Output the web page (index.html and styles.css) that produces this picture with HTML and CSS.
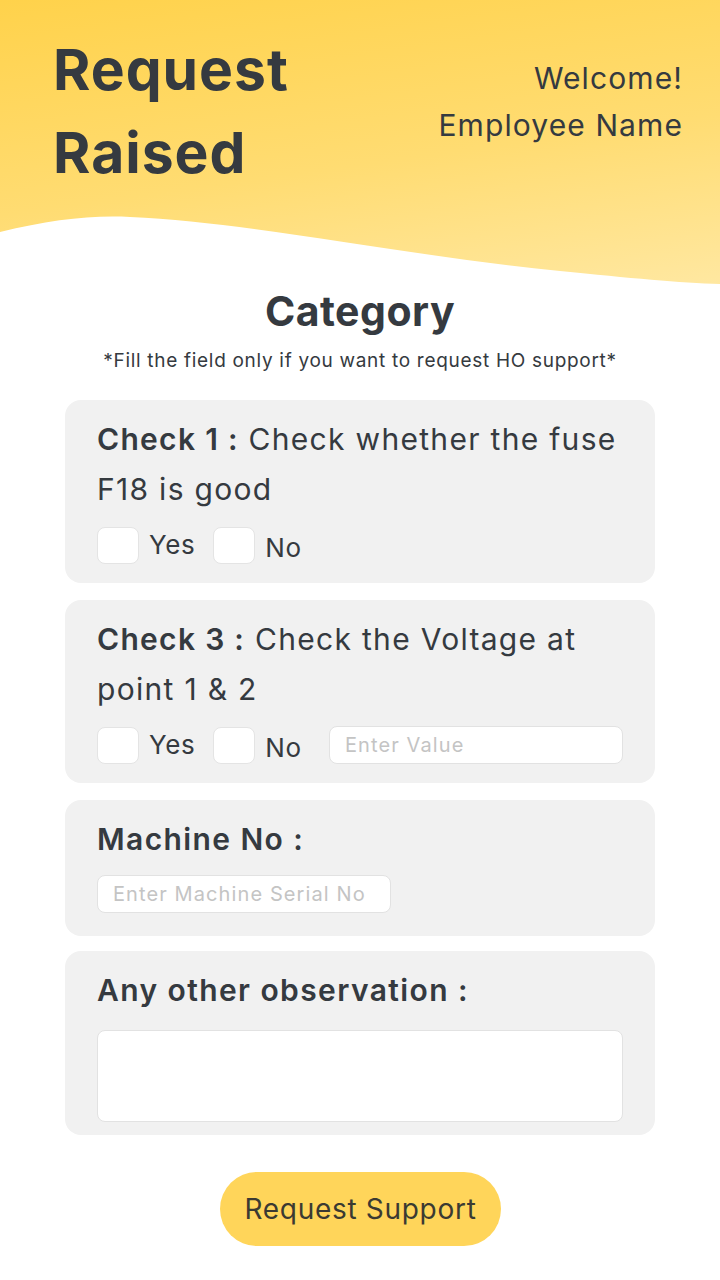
FILE: index.html
```html
<!DOCTYPE html>
<html lang="en">
<head>
<meta charset="utf-8">
<title>Request Raised</title>
<link rel="stylesheet" href="styles.css">
</head>
<body>
<header class="hero">
  <h1 class="hero-title">Request<br>Raised</h1>
  <div class="welcome">
    <div>Welcome!</div>
    <div>Employee Name</div>
  </div>
  <svg class="wave" viewBox="0 0 720 80" preserveAspectRatio="none" aria-hidden="true">
    <path d="M0,22 C50,10 90,5 130,7 C250,12 400,45 560,61 C630,68 680,73 720,74 L720,80 L0,80 Z" fill="#ffffff"/>
  </svg>
</header>

<main class="content">
  <h2 class="section-title">Category</h2>
  <p class="note">*Fill the field only if you want to request HO support*</p>

  <section class="card">
    <p class="question"><b>Check 1 :</b> Check whether the fuse F18 is good</p>
    <div class="options">
      <label class="opt"><span class="box"></span><span class="opt-yes">Yes</span></label>
      <label class="opt"><span class="box"></span><span class="opt-no">No</span></label>
    </div>
  </section>

  <section class="card">
    <p class="question"><b>Check 3 :</b> Check the Voltage at point 1 &amp; 2</p>
    <div class="options">
      <label class="opt"><span class="box"></span><span class="opt-yes">Yes</span></label>
      <label class="opt"><span class="box"></span><span class="opt-no">No</span></label>
      <div class="field field-value">Enter Value</div>
    </div>
  </section>

  <section class="card card-short">
    <p class="label">Machine No :</p>
    <div class="field field-serial">Enter Machine Serial No</div>
  </section>

  <section class="card card-obs">
    <p class="label">Any other observation :</p>
    <div class="textarea"></div>
  </section>

  <div class="actions">
    <button class="btn">Request Support</button>
  </div>
</main>
</body>
</html>
```

FILE: styles.css
```css
* { box-sizing: border-box; }

body {
  margin: 0;
  background: #ffffff;
  font-family: "Inter", "Open Sans", sans-serif;
  color: #353a40;
}

.hero {
  position: relative;
  height: 290px;
  padding: 28px 37px 0 53px;
  display: flex;
  justify-content: space-between;
  align-items: flex-start;
  background: linear-gradient(172deg, #ffd24b 0%, #ffdc72 55%, #ffe8a2 100%);
}

.hero-title {
  margin: 0;
  font-size: 57px;
  line-height: 83px;
  font-weight: 700;
  letter-spacing: 1px;
}

.welcome {
  margin-top: 27px;
  text-align: right;
  font-size: 30px;
  line-height: 47px;
  letter-spacing: 1.1px;
}

.wave {
  position: absolute;
  left: 0;
  bottom: 0;
  width: 100%;
  height: 80px;
  display: block;
}

.content {
  width: 590px;
  margin: 0 auto;
  padding: 0 0 36px;
}

.section-title {
  margin: -2px 0 0;
  text-align: center;
  font-size: 41px;
  line-height: 46px;
  font-weight: 700;
  letter-spacing: 0.5px;
}

.note {
  margin: 14px 0 26px;
  text-align: center;
  font-size: 19px;
  line-height: 26px;
  letter-spacing: 0.7px;
}

.card {
  background: #f1f1f1;
  border-radius: 16px;
  padding: 14px 32px 19px;
  margin-bottom: 17px;
}

.question {
  margin: 0;
  font-size: 30px;
  line-height: 50px;
  letter-spacing: 1.3px;
}

.question b { font-weight: 600; }

.options {
  display: flex;
  align-items: center;
  margin-top: 13px;
}

.opt {
  display: flex;
  align-items: center;
  margin-right: 18px;
}

.box {
  width: 42px;
  height: 37px;
  background: #ffffff;
  border: 1px solid #e4e4e4;
  border-radius: 8px;
  margin-right: 10px;
}

.opt-yes { font-size: 26px; margin-top: -2px; letter-spacing: 0.6px; }
.opt-no { font-size: 26px; margin-top: 4px; letter-spacing: 0.6px; }

.field {
  height: 38px;
  background: #ffffff;
  border: 1px solid #e2e2e2;
  border-radius: 8px;
  color: #c4c4c4;
  font-size: 20px;
  line-height: 36px;
  padding-left: 15px;
  letter-spacing: 1.1px;
}

.field-value {
  width: 294px;
  margin-left: auto;
  margin-top: -1px;
}

.card-short { padding: 18px 32px 23px; margin-bottom: 15px; }

.label {
  margin: 0;
  font-size: 30px;
  line-height: 42px;
  font-weight: 600;
  letter-spacing: 1.4px;
}

.field-serial {
  width: 294px;
  margin-top: 15px;
}

.card-obs { padding: 18px 32px 13px; }

.textarea {
  height: 92px;
  margin-top: 19px;
  background: #ffffff;
  border: 1px solid #e2e2e2;
  border-radius: 8px;
}

.actions {
  display: flex;
  justify-content: center;
  margin-top: 37px;
}

.btn {
  width: 281px;
  height: 74px;
  border: 0;
  border-radius: 37px;
  background: #ffd55a;
  color: #3b3a32;
  font-family: inherit;
  font-size: 28px;
  letter-spacing: 0.7px;
  margin-left: 1px;
}
```
